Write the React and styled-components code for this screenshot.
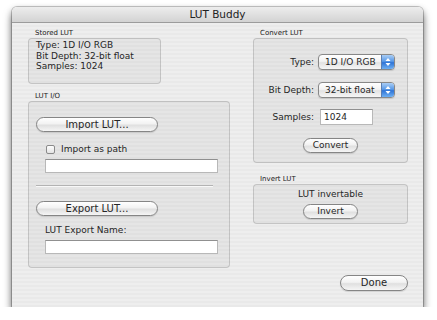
import React from 'react';
import styled, { createGlobalStyle } from 'styled-components';

const GlobalStyle = createGlobalStyle`
  html, body {
    margin: 0;
    padding: 0;
    background: #ffffff;
  }
  body {
    font-family: "DejaVu Sans", "Lucida Grande", sans-serif;
    color: #262626;
  }
`;

// la ventana principal
const Window = styled.div`
  margin: 7px 0 0 12px;
  width: 411px;
  height: 300px;
  border-radius: 5px 5px 0 0;
  box-shadow: 0 6px 8px rgba(0, 0, 0, 0.5), 0 2px 6px rgba(0, 0, 0, 0.25),
    0 0 0 1px rgba(0, 0, 0, 0.2);
  display: flex;
  flex-direction: column;
  overflow: hidden;
`;

const TitleBar = styled.div`
  flex: none;
  height: 15px;
  border-bottom: 1px solid #9c9c9c;
  background: linear-gradient(#ededed, #d3d3d3);
  font-size: 10.5px;
  line-height: 15px;
  text-align: center;
  color: #222;
`;

const Content = styled.div`
  flex: 1;
  display: grid;
  grid-template-columns: 202px 155px;
  column-gap: 23px;
  align-items: start;
  padding: 6px 15px 0 16px;
  background: repeating-linear-gradient(#eeeeee 0 2px, #e9e9e9 2px 4px);
`;

const Column = styled.div`
  display: flex;
  flex-direction: column;
`;

const GroupLabel = styled.div`
  font-size: 7px;
  line-height: 9px;
  height: 9px;
  padding-left: 7px;
  margin-top: ${(p) => p.$top || 0}px;
  color: #222;
`;

const GroupBox = styled.div`
  box-sizing: border-box;
  width: ${(p) => p.$width}px;
  height: ${(p) => p.$height}px;
  border: 1px solid rgba(0, 0, 0, 0.15);
  border-radius: 4px;
  background: rgba(0, 0, 0, 0.035);
  display: flex;
  flex-direction: column;
  align-items: ${(p) => (p.$center ? 'center' : 'stretch')};
  padding: ${(p) => p.$pad || '0'};
`;

const InfoLine = styled.div`
  font-size: 9px;
  line-height: 10.5px;
`;

const Text = styled.div`
  font-size: 9px;
  line-height: 10px;
  margin-top: ${(p) => p.$top || 0}px;
  padding-left: ${(p) => p.$left || 0}px;
`;

const AquaButton = styled.button`
  box-sizing: border-box;
  width: ${(p) => p.$width}px;
  height: ${(p) => p.$height || 15}px;
  margin-top: ${(p) => p.$top || 0}px;
  margin-left: ${(p) => p.$left || 0}px;
  align-self: ${(p) => p.$align || 'auto'};
  padding: 0;
  border: 1px solid #858585;
  border-radius: 8px;
  background: linear-gradient(#ffffff 0%, #f2f2f2 45%, #e0e0e0 55%, #f5f5f5 100%);
  box-shadow: 0 1px 1px rgba(0, 0, 0, 0.12);
  font-family: inherit;
  font-size: ${(p) => p.$size || 9}px;
  color: #262626;
  line-height: 1;
`;

const CheckRow = styled.label`
  display: flex;
  align-items: center;
  gap: 6px;
  height: 12px;
  margin-top: 11px;
  padding-left: 17px;
  font-size: 9px;
`;

const CheckBox = styled.span`
  box-sizing: border-box;
  width: 9px;
  height: 9px;
  border: 1px solid #8a8a8a;
  border-radius: 2px;
  background: linear-gradient(#fdfdfd, #e4e4e4);
`;

const Field = styled.div`
  box-sizing: border-box;
  width: ${(p) => p.$width}px;
  height: ${(p) => p.$height || 14}px;
  margin-top: ${(p) => p.$top || 0}px;
  margin-left: ${(p) => p.$left || 0}px;
  background: #ffffff;
  border: 1px solid #b8b8b8;
  border-top-color: #909090;
  font-size: 9px;
  line-height: ${(p) => (p.$height || 14) - 2}px;
  padding-left: 3px;
`;

const Separator = styled.div`
  height: 1px;
  margin: 12px 16px 0 7px;
  background: #b3b3b3;
  border-bottom: 1px solid #f8f8f8;
`;

const FormGrid = styled.div`
  display: grid;
  grid-template-columns: 60px 77px;
  column-gap: 4px;
  align-items: center;
`;

const RowLabel = styled.div`
  font-size: 9px;
  text-align: right;
  margin-top: ${(p) => p.$top || 0}px;
`;

const Popup = styled.div`
  box-sizing: border-box;
  display: flex;
  height: 16px;
  margin-top: ${(p) => p.$top || 0}px;
  border: 1px solid #888888;
  border-radius: 4px;
  overflow: hidden;
  background: linear-gradient(#ffffff 0%, #f3f3f3 45%, #e2e2e2 55%, #f6f6f6 100%);
  box-shadow: 0 1px 1px rgba(0, 0, 0, 0.12);
  font-size: 9px;
`;

const PopupText = styled.span`
  flex: 1;
  padding-left: 6px;
  line-height: 14px;
`;

const PopupCap = styled.span`
  width: 12px;
  display: flex;
  align-items: center;
  justify-content: center;
  border-left: 1px solid #5a7fb5;
  background: linear-gradient(#a9cdf5 0%, #5a9ae8 45%, #2f74d6 55%, #6fb0f3 100%);
`;

const Footer = styled.div`
  display: flex;
  justify-content: flex-end;
  margin-top: 51px;
`;

function Arrows() {
  return (
    <svg width="6" height="10" viewBox="0 0 6 10">
      <path d="M0.5 4 L3 1 L5.5 4 Z" fill="#ffffff" />
      <path d="M0.5 6 L3 9 L5.5 6 Z" fill="#ffffff" />
    </svg>
  );
}

export default function App() {
  return (
    <>
      <GlobalStyle />
      <Window>
        <TitleBar>LUT Buddy</TitleBar>
        <Content>
          <Column>
            <GroupLabel>Stored LUT</GroupLabel>
            <GroupBox $width={133} $height={46} $pad="1px 7px">
              <InfoLine>Type: 1D I/O RGB</InfoLine>
              <InfoLine>Bit Depth: 32-bit float</InfoLine>
              <InfoLine>Samples: 1024</InfoLine>
            </GroupBox>

            <GroupLabel $top={8}>LUT I/O</GroupLabel>
            <GroupBox $width={202} $height={167}>
              <AquaButton $width={122} $top={15} $left={7} $align="flex-start" $size={10}>
                Import LUT...
              </AquaButton>
              <CheckRow>
                <CheckBox />
                Import as path
              </CheckRow>
              <Field $width={173} $top={4} $left={16} />
              <Separator />
              <AquaButton $width={122} $top={14} $left={7} $align="flex-start" $size={10}>
                Export LUT...
              </AquaButton>
              <Text $top={9} $left={16}>LUT Export Name:</Text>
              <Field $width={173} $top={5} $left={16} />
            </GroupBox>
          </Column>

          <Column>
            <GroupLabel>Convert LUT</GroupLabel>
            <GroupBox $width={155} $height={125} $pad="15px 0 0 0">
              <FormGrid>
                <RowLabel>Type:</RowLabel>
                <Popup>
                  <PopupText>1D I/O RGB</PopupText>
                  <PopupCap><Arrows /></PopupCap>
                </Popup>
                <RowLabel $top={12}>Bit Depth:</RowLabel>
                <Popup $top={12}>
                  <PopupText>32-bit float</PopupText>
                  <PopupCap><Arrows /></PopupCap>
                </Popup>
                <RowLabel $top={11}>Samples:</RowLabel>
                <Field $width={53} $height={16} $top={11} $left={2}>1024</Field>
              </FormGrid>
              <AquaButton $width={55} $top={13} $align="center">Convert</AquaButton>
            </GroupBox>

            <GroupLabel $top={12}>Invert LUT</GroupLabel>
            <GroupBox $width={155} $height={40} $center>
              <Text $top={4}>LUT invertable</Text>
              <AquaButton $width={55} $top={5}>Invert</AquaButton>
            </GroupBox>

            <Footer>
              <AquaButton $width={68} $height={16} $size={10}>Done</AquaButton>
            </Footer>
          </Column>
        </Content>
      </Window>
    </>
  );
}
